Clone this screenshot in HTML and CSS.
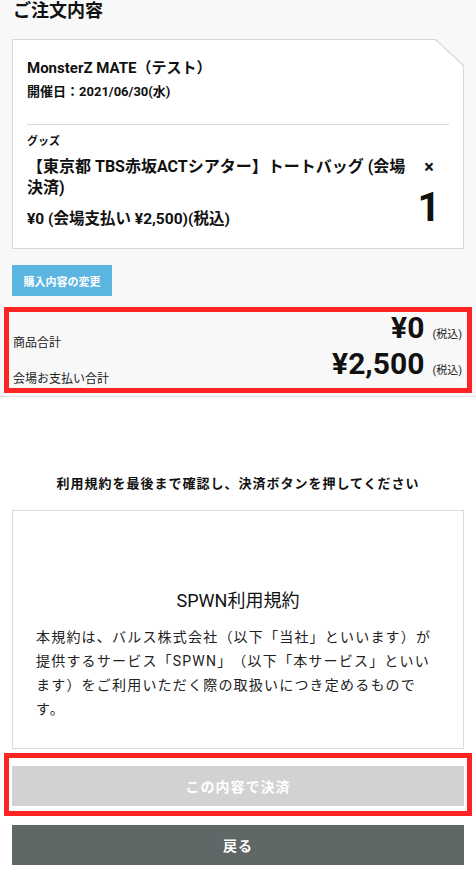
FILE: index.html
```html
<!DOCTYPE html>
<html lang="ja">
<head>
  <meta charset="UTF-8">
  <meta name="viewport" content="width=device-width, initial-scale=1.0">
  <title>ご注文内容</title>
  <link rel="stylesheet" href="styles.css">
</head>
<body>

  <!-- 注文内容 -->
  <section class="summary">
    <h1 class="page-title">ご注文内容</h1>

    <div class="order-card">
      <div class="event">
        <p class="event-name">MonsterZ MATE（テスト）</p>
        <p class="event-date">開催日：2021/06/30(水)</p>
      </div>
      <div class="goods">
        <p class="goods-label">グッズ</p>
        <div class="goods-row">
          <div class="goods-info">
            <p class="goods-name">【東京都 TBS赤坂ACTシアター】トートバッグ (会場決済)</p>
            <p class="goods-price">¥0 (会場支払い ¥2,500)(税込)</p>
          </div>
          <div class="goods-qty">
            <span class="times">×</span>
            <span class="count">1</span>
          </div>
        </div>
      </div>
    </div>

    <button class="btn-change">購入内容の変更</button>

    <div class="totals marked">
      <div class="total-row">
        <span class="total-label">商品合計</span>
        <span class="total-amount">¥0<small>(税込)</small></span>
      </div>
      <div class="total-row">
        <span class="total-label">会場お支払い合計</span>
        <span class="total-amount">¥2,500<small>(税込)</small></span>
      </div>
    </div>
  </section>

  <!-- 利用規約 -->
  <section class="agreement">
    <p class="notice">利用規約を最後まで確認し、決済ボタンを押してください</p>

    <div class="terms">
      <h2 class="terms-title">SPWN利用規約</h2>
      <p class="terms-text">本規約は、バルス株式会社（以下「当社」といいます）が提供するサービス「SPWN」（以下「本サービス」といいます）をご利用いただく際の取扱いにつき定めるものです。</p>
    </div>

    <div class="pay-wrap marked">
      <button class="btn btn-pay" disabled>この内容で決済</button>
    </div>
    <button class="btn btn-back">戻る</button>
  </section>

</body>
</html>
```

FILE: styles.css
```css
body {
  margin: 0;
  padding: 0;
  background: #fff;
  color: #111;
  font-family: Roboto, "Noto Sans CJK JP", sans-serif;
  text-spacing-trim: space-all;
  overflow: hidden;
}

p, h1, h2 {
  margin: 0;
}

.summary {
  background: #f8f8f8;
  border-bottom: 1px solid #e2e2e2;
  padding: 0 12px 3px;
}

.page-title {
  font-size: 18px;
  line-height: 22px;
  font-weight: bold;
  padding-left: 1px;
}

/* 注文カード */
.order-card {
  position: relative;
  margin-top: 17px;
  background: #fff;
  border: 1px solid #d8d8d8;
  padding: 16px 19px 18px 14px;
}

.order-card::before {
  content: "";
  position: absolute;
  top: -1px;
  right: -1px;
  width: 29px;
  height: 27px;
  background: linear-gradient(to bottom left, #f8f8f8 calc(50% - 1px), #cfcfcf 50%, transparent calc(50% + 1px));
}

.event {
  padding-bottom: 20px;
  border-bottom: 1px solid #d8d8d8;
  margin-right: -5px;
}

.event-name {
  font-size: 15px;
  line-height: 24px;
  font-weight: bold;
}

.event-date {
  font-size: 13px;
  line-height: 24px;
  font-weight: bold;
}

.goods {
  padding-top: 9px;
}

.goods-label {
  font-size: 11px;
  line-height: 16px;
  font-weight: bold;
}

.goods-row {
  display: flex;
  margin-top: 6px;
}

.goods-info {
  flex: 1;
}

.goods-name {
  font-size: 16px;
  line-height: 21px;
  font-weight: bold;
}

.goods-price {
  margin-top: 10px;
  font-size: 15.5px;
  line-height: 22px;
  font-weight: bold;
}

.goods-qty {
  width: 30px;
  display: flex;
  flex-direction: column;
  align-items: center;
}

.times {
  font-size: 18px;
  line-height: 22px;
  font-weight: bold;
}

.count {
  margin-top: 10px;
  font-size: 40px;
  line-height: 40px;
  font-weight: bold;
}

.btn-change {
  display: block;
  margin-top: 16px;
  width: 100px;
  height: 31px;
  border: none;
  background: #5bb5e1;
  color: #fff;
  font-family: inherit;
  font-size: 11px;
  font-weight: bold;
  padding: 0;
}

/* 赤枠 */
.marked {
  border: 5px solid #ff2424;
}

.totals {
  margin: 11px -8px 0;
  padding: 8px 5px 0 4px;
  height: 68px;
}

.total-row {
  display: flex;
  justify-content: space-between;
  align-items: flex-end;
  height: 30px;
}

.total-row + .total-row {
  margin-top: 6px;
}

.total-label {
  font-size: 12px;
  line-height: 14px;
  color: #222;
}

.total-amount {
  font-size: 30px;
  line-height: 30px;
  font-weight: bold;
}

.total-amount small {
  font-size: 11px;
  font-weight: normal;
  margin-left: 8px;
  color: #222;
}

/* 規約 */
.agreement {
  padding: 0 12px;
}

.notice {
  margin-top: 77px;
  text-align: center;
  font-size: 13px;
  line-height: 20px;
  font-weight: bold;
  letter-spacing: 1px;
}

.terms {
  margin-top: 16px;
  height: 239px;
  box-sizing: border-box;
  border: 1px solid #dcdcdc;
  padding: 77px 28px 0 23px;
}

.terms-title {
  text-align: center;
  font-size: 18px;
  line-height: 26px;
  font-weight: normal;
  margin-right: -5px;
}

.terms-text {
  margin-top: 11px;
  font-size: 14px;
  line-height: 24px;
  letter-spacing: 1.2px;
  color: #222;
}

.pay-wrap {
  margin: 4px -8px 0;
  padding: 8px 3px 5px;
}

.btn {
  display: block;
  width: 100%;
  height: 40px;
  border: none;
  color: #fff;
  font-family: inherit;
  font-size: 14px;
  font-weight: bold;
  letter-spacing: 1px;
}

.btn-pay {
  background: #d2d2d2;
}

.btn-back {
  margin-top: 9px;
  background: #5f6767;
}
```
